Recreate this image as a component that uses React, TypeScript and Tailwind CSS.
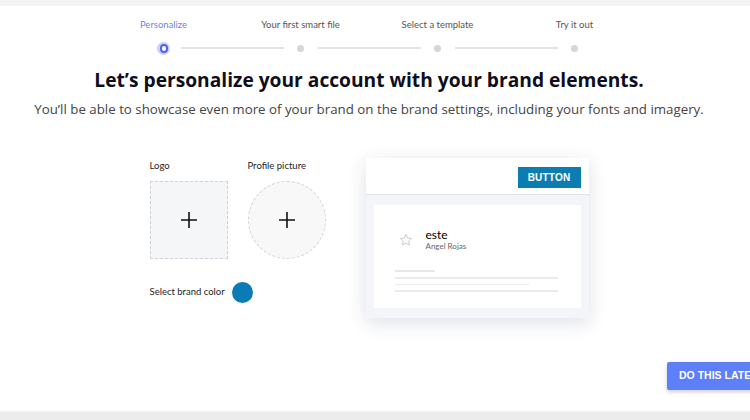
import React from 'react';

const steps = ['Personalize', 'Your first smart file', 'Select a template', 'Try it out'];

function Stepper() {
  return (
    <div className="w-[548px] mx-auto mt-[13px]">
      <div className="grid grid-cols-4 h-[12px] items-center">
        {steps.map((s, i) => (
          <div
            key={s}
            className={`text-center text-[9.5px] leading-none ${i === 0 ? 'text-[#6f7ff2]' : 'text-[#555]'}`}
          >
            {s}
          </div>
        ))}
      </div>
      <div className="mt-[7px] flex items-center h-[20px] pl-[51.5px]">
        {steps.map((s, i) => (
          <React.Fragment key={s}>
            <div className="w-[34px] flex justify-center">
              {i === 0 ? (
                <div className="w-[13px] h-[13px] rounded-full bg-[#c9d0fb] flex items-center justify-center">
                  <div className="w-[8px] h-[9px] rounded-full border-2 border-[#4f63ee] bg-white" />
                </div>
              ) : (
                <div className="w-[7px] h-[7px] rounded-full bg-[#d6d6d6]" />
              )}
            </div>
            {i < steps.length - 1 && <div className="w-[103px] h-[1.5px] bg-[#e3e3e3]" />}
          </React.Fragment>
        ))}
      </div>
    </div>
  );
}

function Plus() {
  return (
    <svg width="18" height="18" viewBox="0 0 18 18">
      <path d="M9 1v16M1 9h16" stroke="#111" strokeWidth="1.6" />
    </svg>
  );
}

function Star() {
  return (
    <svg width="14" height="14" viewBox="0 0 24 24" fill="none" stroke="#c8c8c8" strokeWidth="1.6" strokeLinejoin="round">
      <path d="M12 2.5l2.9 6.1 6.6.8-4.9 4.6 1.3 6.6L12 17.3l-5.9 3.3 1.3-6.6-4.9-4.6 6.6-.8z" />
    </svg>
  );
}

function PreviewCard() {
  return (
    <div className="w-[223px] h-[160px] bg-[#f4f5f8] shadow-[0_5px_18px_rgba(30,40,80,0.14)] flex flex-col">
      <div className="h-[37px] bg-white border-b border-[#dfe2ea] flex items-center justify-end pr-[8px] pt-[3px]">
        <div className="w-[63px] h-[21px] bg-[#0b7db3] text-white text-[10px] font-bold flex items-center justify-center tracking-[0.2px] font-['Liberation_Sans',sans-serif]">
          BUTTON
        </div>
      </div>
      <div className="flex-1 px-[8px] pt-[10px] pb-[10px]">
        <div className="h-full bg-white pl-[21px] pt-[23px]">
          <div className="flex items-center gap-[13px] pl-[4px]">
            <Star />
            <div className="flex flex-col">
              <span className="text-[12px] leading-[13px] text-black">este</span>
              <span className="text-[8px] leading-[11px] text-[#666]">Angel Rojas</span>
            </div>
          </div>
          <div className="mt-[18px] flex flex-col gap-[5px]">
            <div className="w-[40px] h-[1.5px] bg-[#e8e8e8]" />
            <div className="w-[163px] h-[2px] bg-[#ebebeb]" />
            <div className="w-[134px] h-[1.5px] bg-[#ebebeb]" />
            <div className="w-[163px] h-[2px] bg-[#ebebeb]" />
          </div>
        </div>
      </div>
    </div>
  );
}

export default function App() {
  return (
    <div className="w-[750px] h-[420px] bg-white overflow-hidden flex flex-col font-['Lato',sans-serif] text-[#222]">
      <div className="h-[6px] bg-[#f4f4f4] shrink-0" />
      <div className="flex-1 flex flex-col w-[738px]">
        <Stepper />
        <h1 className="mt-[10px] text-center text-[19.2px] leading-[24px] font-bold text-[#0e0e1c] font-['Open_Sans',sans-serif]">
          Let’s personalize your account with your brand elements.
        </h1>
        <p className="mt-[9px] text-center text-[13.3px] leading-[16px] text-[#444] font-['Open_Sans',sans-serif]">
          You’ll be able to showcase even more of your brand on the brand settings, including your fonts and imagery.
        </p>
        <div className="mt-[41px] flex justify-center gap-[40px] pl-[0px]">
          <div className="flex flex-col">
            <div className="flex gap-[20px] mt-[2px]">
              <div className="flex flex-col">
                <span className="text-[9.5px] leading-[12px] text-[#222]">Logo</span>
                <div className="mt-[9px] w-[78px] h-[78px] bg-[#f5f6f8] border border-dashed border-[#cfd2d8] flex items-center justify-center">
                  <Plus />
                </div>
              </div>
              <div className="flex flex-col">
                <span className="text-[9.5px] leading-[12px] text-[#222]">Profile picture</span>
                <div className="mt-[9px] w-[78px] h-[78px] rounded-full bg-[#f8f8f9] border border-dashed border-[#cfd2d8] flex items-center justify-center">
                  <Plus />
                </div>
              </div>
            </div>
            <div className="mt-[23px] flex items-center gap-[7px]">
              <span className="text-[9.5px] text-[#222]">Select brand color</span>
              <div className="w-[21px] h-[21px] rounded-full bg-[#0a7bb4]" />
            </div>
          </div>
          <PreviewCard />
        </div>
        <div className="mt-auto mb-[22px] flex justify-end -mr-[33px]">
          <div className="w-[104px] h-[28px] bg-[#5d7ffa] shadow-[0_2px_4px_rgba(0,0,0,0.2)] rounded-[2px] flex items-center pl-[12px] text-white text-[10.5px] font-bold font-['Liberation_Sans',sans-serif] whitespace-nowrap">
            DO THIS LATER
          </div>
        </div>
      </div>
      <div className="h-[8px] bg-[#ececec] shrink-0 shadow-[0_-1px_2px_rgba(0,0,0,0.05)]" />
    </div>
  );
}
